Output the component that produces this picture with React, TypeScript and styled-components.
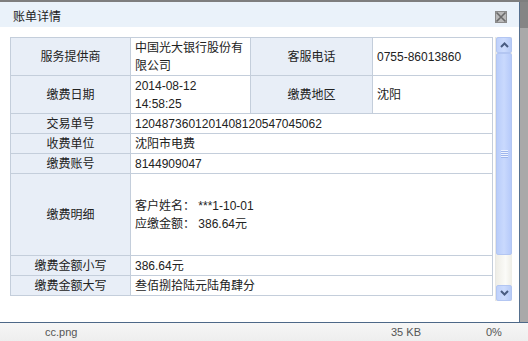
import React from 'react';
import styled, { createGlobalStyle } from 'styled-components';

const GlobalStyle = createGlobalStyle`
  html, body {
    margin: 0;
    padding: 0;
    background: #a9a9a9;
  }
  body {
    font-family: "Liberation Sans", "Noto Sans CJK SC", sans-serif;
    font-size: 12px;
    color: #222;
  }
`;

interface Row {
  label: string;
  value: React.ReactNode;
  height: number;
  label2?: string;
  value2?: string;
}

const rows: Row[] = [
  {
    label: '服务提供商',
    value: '中国光大银行股份有限公司',
    label2: '客服电话',
    value2: '0755-86013860',
    height: 37,
  },
  {
    label: '缴费日期',
    value: (
      <>
        2014-08-12
        <br />
        14:58:25
      </>
    ),
    label2: '缴费地区',
    value2: '沈阳',
    height: 37,
  },
  { label: '交易单号', value: '1204873601201408120547045062', height: 19 },
  { label: '收费单位', value: '沈阳市电费', height: 19 },
  { label: '缴费账号', value: '8144909047', height: 19 },
  {
    label: '缴费明细',
    value: (
      <>
        客户姓名： ***1-10-01
        <br />
        应缴金额： 386.64元
      </>
    ),
    height: 81,
  },
  { label: '缴费金额小写', value: '386.64元', height: 19 },
  { label: '缴费金额大写', value: '叁佰捌拾陆元陆角肆分', height: 19 },
];

const Page = styled.div`
  width: 528px;
  height: 341px;
  display: flex;
  flex-direction: column;
  overflow: hidden;
`;

const TopStrip = styled.div`
  height: 2px;
  background: #7e7e7e;
`;

const Main = styled.div`
  display: flex;
  height: 320px;
`;

const Dialog = styled.div`
  width: 519px;
  background: #fff;
  border-right: 1px solid #56708e;
  display: flex;
  flex-direction: column;
`;

const SideGray = styled.div`
  flex: 1;
  background: linear-gradient(#858585 0, #858585 26px, #a9a9a9 26px);
`;

const TitleBar = styled.div`
  height: 25px;
  background: #eaf2fa;
  display: flex;
  align-items: center;
  justify-content: space-between;
  padding: 1px 12px 0 13px;
  box-sizing: border-box;
  font-size: 12px;
  color: #222;
`;

const CloseButton = styled.button`
  border: none;
  padding: 0;
  background: none;
  width: 12px;
  height: 12px;
  margin-top: 4px;
  display: flex;
  cursor: pointer;
`;

const Body = styled.div`
  flex: 1;
  padding: 10px 0 0 10px;
  display: flex;
  align-items: flex-start;
  gap: 2px;
`;

const Table = styled.table`
  border-collapse: collapse;
  table-layout: fixed;
  width: 482px;
  font-size: 12px;
`;

const LabelCell = styled.td`
  border: 1px solid #c4cedb;
  background: #e8eef7;
  text-align: center;
  padding: 0 4px;
  line-height: 18px;
  color: #222;
`;

const ValueCell = styled.td<{ $h: number }>`
  border: 1px solid #c4cedb;
  background: #fff;
  padding: 1px 4px 0 4px;
  height: ${(p) => p.$h - 1}px;
  line-height: ${(p) => (p.$h > 19 ? '18px' : '18px')};
  color: #222;
  vertical-align: middle;
  word-break: break-all;
`;

const Scrollbar = styled.div`
  width: 16px;
  height: 264px;
  display: flex;
  flex-direction: column;
  background: linear-gradient(90deg, #eeede6, #fbfbf8 60%, #eeede6);
  border-left: 1px solid #e8e8e4;
`;

const ScrollButton = styled.div`
  height: 16px;
  box-sizing: border-box;
  border: 1px solid #b3c6f2;
  border-radius: 2px;
  background: linear-gradient(90deg, #bfd1fb, #cddcfd 50%, #b7cbf7);
  display: flex;
  align-items: center;
  justify-content: center;
`;

const Thumb = styled.div`
  height: 202px;
  box-sizing: border-box;
  border: 1px solid #b3c6f2;
  border-radius: 2px;
  background: linear-gradient(90deg, #b9cdfa, #c9d9fd 50%, #b6cafa);
  display: flex;
  align-items: center;
  justify-content: center;
`;

const Grip = styled.div`
  width: 7px;
  height: 8px;
  background: repeating-linear-gradient(#eef3ff 0 1px, #9fb6ec 1px 2px);
`;

const Track = styled.div`
  flex: 1;
`;

const StatusBar = styled.div`
  flex: 1;
  border-top: 1px solid #4d6888;
  background: linear-gradient(#f6f6f6, #eeeeee);
  display: grid;
  grid-template-columns: 346px 95px 1fr;
  align-items: center;
  padding-left: 45px;
  font-size: 11px;
  color: #555;
`;

const Chevron: React.FC<{ up?: boolean }> = ({ up }) => (
  <svg width="9" height="6" viewBox="0 0 9 6">
    <path
      d={up ? 'M1 5 L4.5 1.5 L8 5' : 'M1 1 L4.5 4.5 L8 1'}
      fill="none"
      stroke="#4a5d82"
      strokeWidth="2"
    />
  </svg>
);

const App: React.FC = () => (
  <Page>
    <GlobalStyle />
    <TopStrip />
    <Main>
      <Dialog>
        <TitleBar>
          <span>账单详情</span>
          <CloseButton aria-label="close">
            <svg width="12" height="12" viewBox="0 0 12 12">
              <rect x="0.5" y="0.5" width="11" height="11" fill="#b9b9b9" stroke="#8a8a8a" />
              <path d="M1.5 1.5 L10.5 10.5 M10.5 1.5 L1.5 10.5" stroke="#6a6a6a" strokeWidth="1.6" />
            </svg>
          </CloseButton>
        </TitleBar>
        <Body>
          <Table>
            <colgroup>
              <col style={{ width: 120 }} />
              <col style={{ width: 120 }} />
              <col style={{ width: 122 }} />
              <col style={{ width: 120 }} />
            </colgroup>
            <tbody>
              {rows.map((row) => (
                <tr key={row.label}>
                  <LabelCell>{row.label}</LabelCell>
                  {row.label2 ? (
                    <>
                      <ValueCell $h={row.height}>{row.value}</ValueCell>
                      <LabelCell>{row.label2}</LabelCell>
                      <ValueCell $h={row.height}>{row.value2}</ValueCell>
                    </>
                  ) : (
                    <ValueCell $h={row.height} colSpan={3}>
                      {row.value}
                    </ValueCell>
                  )}
                </tr>
              ))}
            </tbody>
          </Table>
          <Scrollbar>
            <ScrollButton>
              <Chevron up />
            </ScrollButton>
            <Thumb>
              <Grip />
            </Thumb>
            <Track />
            <ScrollButton>
              <Chevron />
            </ScrollButton>
          </Scrollbar>
        </Body>
      </Dialog>
      <SideGray />
    </Main>
    <StatusBar>
      <span>cc.png</span>
      <span>35 KB</span>
      <span>0%</span>
    </StatusBar>
  </Page>
);

export default App;
